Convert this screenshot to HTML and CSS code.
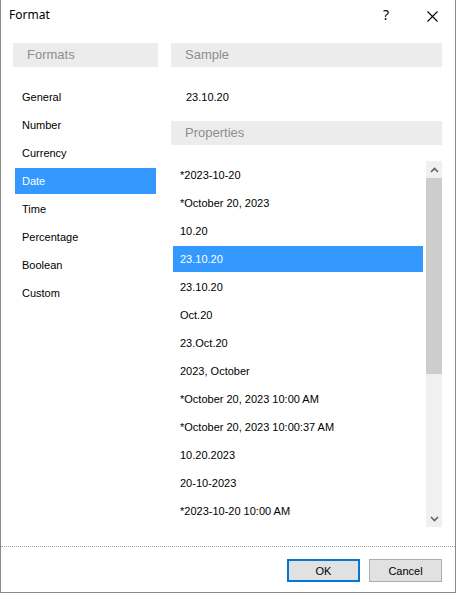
FILE: index.html
```html
<!DOCTYPE html>
<html>
<head>
<meta charset="utf-8">
<link rel="stylesheet" href="styles.css">
</head>
<body>
<div class="window">
  <div class="titlebar">
    <span class="title">Format</span>
    <span class="tb-btn help">?</span>
    <span class="tb-btn close">
      <svg width="11" height="11" viewBox="0 0 11 11"><path d="M0.5 0.5 L10.5 10.5 M10.5 0.5 L0.5 10.5" stroke="#000" stroke-width="1.1" fill="none"/></svg>
    </span>
  </div>
  <div class="content">
    <div class="left">
      <div class="header">Formats</div>
      <ul class="formats">
        <li>General</li>
        <li>Number</li>
        <li>Currency</li>
        <li class="selected">Date</li>
        <li>Time</li>
        <li>Percentage</li>
        <li>Boolean</li>
        <li>Custom</li>
      </ul>
    </div>
    <div class="right">
      <div class="header">Sample</div>
      <div class="sample">23.10.20</div>
      <div class="header">Properties</div>
      <div class="listbox">
        <ul class="props">
          <li>*2023-10-20</li>
          <li>*October 20, 2023</li>
          <li>10.20</li>
          <li class="selected">23.10.20</li>
          <li>23.10.20</li>
          <li>Oct.20</li>
          <li>23.Oct.20</li>
          <li>2023, October</li>
          <li>*October 20, 2023 10:00 AM</li>
          <li>*October 20, 2023 10:00:37 AM</li>
          <li>10.20.2023</li>
          <li>20-10-2023</li>
          <li>*2023-10-20 10:00 AM</li>
        </ul>
        <div class="scrollbar">
          <div class="arrow">
            <svg width="9" height="6" viewBox="0 0 9 6"><path d="M1 5 L4.5 1.5 L8 5" stroke="#606060" stroke-width="1.6" fill="none"/></svg>
          </div>
          <div class="thumb"></div>
          <div class="track"></div>
          <div class="arrow">
            <svg width="9" height="6" viewBox="0 0 9 6"><path d="M1 1 L4.5 4.5 L8 1" stroke="#606060" stroke-width="1.6" fill="none"/></svg>
          </div>
        </div>
      </div>
    </div>
  </div>
  <div class="separator"></div>
  <div class="buttons">
    <button class="btn default">OK</button>
    <button class="btn">Cancel</button>
  </div>
</div>
</body>
</html>
```

FILE: styles.css
```css
* { box-sizing: border-box; }
html, body { margin: 0; padding: 0; background: #fff; }
body { width: 456px; height: 593px; overflow: hidden; font-family: "Liberation Sans", Arial, sans-serif; font-size: 11px; color: #000; }

.window {
  width: 456px;
  height: 593px;
  border-left: 1px solid #8a8a8a;
  border-right: 1px solid #8a8a8a;
  border-bottom: 1px solid #8a8a8a;
  display: flex;
  flex-direction: column;
  background: #fff;
}

.titlebar {
  height: 31px;
  display: flex;
  align-items: center;
}
.title {
  font-family: "Noto Sans", "Segoe UI", sans-serif;
  font-size: 12px;
  padding-left: 8px;
  flex: 1;
  line-height: 16px;
  padding-bottom: 1px;
}
.tb-btn {
  width: 46px;
  height: 31px;
  display: flex;
  align-items: center;
  justify-content: center;
}
.help {
  font-family: "Noto Sans", "Segoe UI", sans-serif;
  font-size: 14px;
  padding-bottom: 2px;
}
.close svg { display: block; margin-top: 1px; }

.content {
  display: flex;
  padding: 12px 13px 0 12px;
  gap: 13px;
}
.left { width: 145px; }
.right { flex: 1; }

.header {
  height: 24px;
  background: #ececec;
  color: #8e8e8e;
  font-size: 13px;
  line-height: 24px;
  padding-left: 14px;
}

ul { list-style: none; margin: 0; padding: 0; }

.formats { margin-top: 17px; padding-left: 2px; padding-right: 2px; }
.formats li, .props li {
  height: 26px;
  line-height: 26px;
  margin-bottom: 2px;
  padding-left: 7px;
  white-space: nowrap;
}
.selected { background: #3399ff; color: #fff; }

.sample {
  height: 54px;
  padding-left: 15px;
  padding-top: 23px;
  line-height: 14px;
}

.listbox {
  margin-top: 16px;
  height: 366px;
  display: flex;
  overflow: hidden;
}
.props {
  flex: 1;
  padding: 1px 3px 0 2px;
  overflow: hidden;
}
.scrollbar {
  width: 16px;
  background: #f0f0f0;
  display: flex;
  flex-direction: column;
}
.arrow {
  height: 17px;
  display: flex;
  align-items: center;
  justify-content: center;
}
.arrow svg { display: block; }
.thumb { height: 196px; background: #cdcdcd; }
.track { flex: 1; }

.separator {
  margin-top: 19px;
  border-top: 1px dotted #a0a0a0;
}

.buttons {
  display: flex;
  justify-content: flex-end;
  gap: 9px;
  padding: 12px 13px 0 0;
}
.btn {
  width: 73px;
  height: 23px;
  background: #e1e1e1;
  border: 1px solid #adadad;
  font-family: "Liberation Sans", Arial, sans-serif;
  font-size: 11px;
  color: #000;
  padding: 0;
  margin: 0;
}
.btn.default { border: 2px solid #0078d7; }
```
